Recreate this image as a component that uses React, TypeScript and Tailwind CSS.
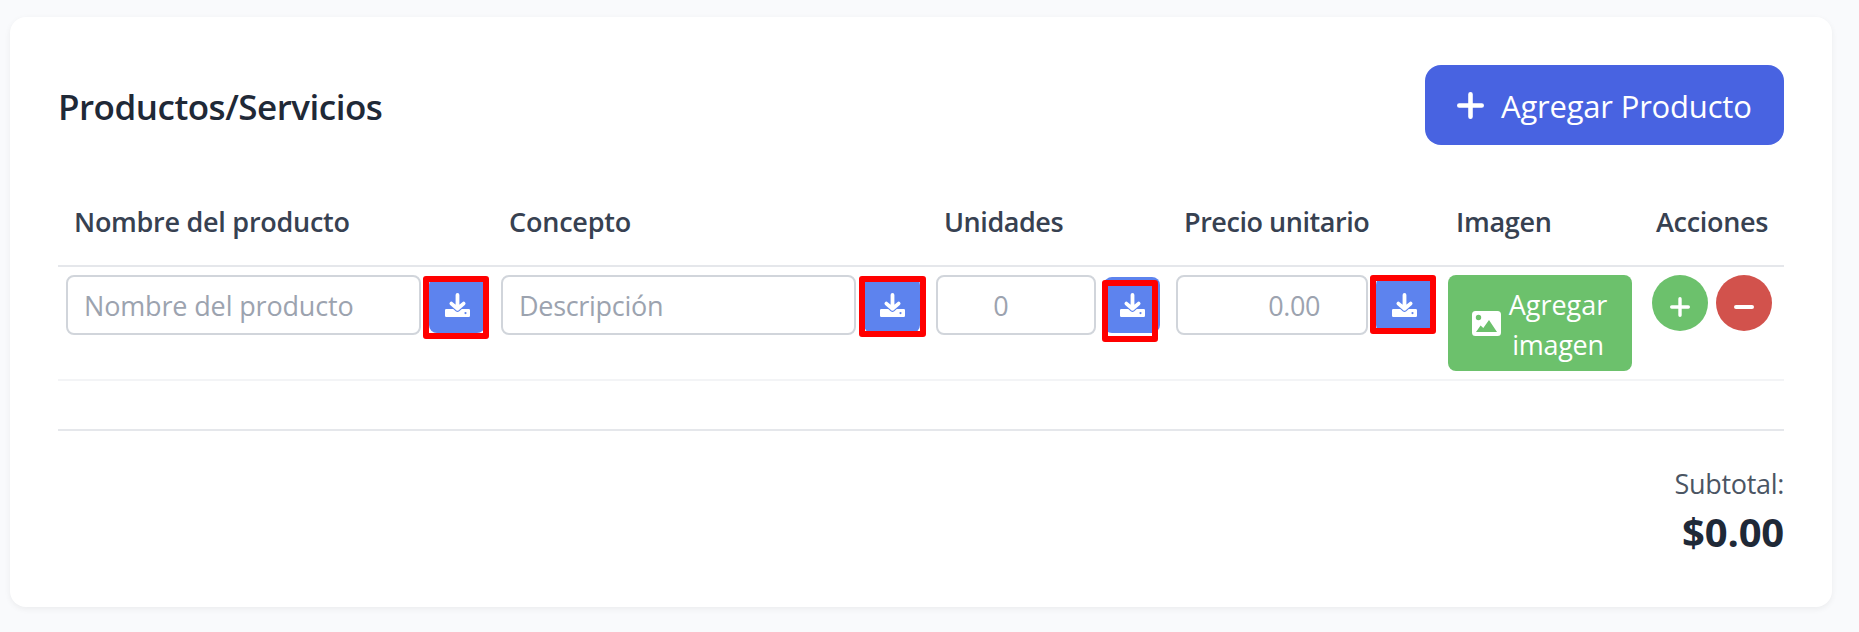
import React from "react";

function DownloadIcon() {
  return (
    <svg viewBox="0 0 25 24" className="h-6 w-[25px]" fill="none" strokeLinecap="round" strokeLinejoin="round">
      <path
        fill="#fff"
        fillRule="evenodd"
        d="M1.200 16H23.800Q25 16 25 17.200V22.800Q25 24 23.800 24H1.200Q0 24 0 22.800V17.200Q0 16 1.200 16ZM20.500 19a1.100 1.100 0 1 0 0 2.200a1.100 1.100 0 1 0 0-2.200Z"
      />
      <path d="M6.400 10.800L12.500 16.200L18.600 10.800" stroke="#5d83ee" strokeWidth="5.400" />
      <path d="M12.500 2V15M6.400 10.600L12.500 15.800L18.600 10.600" stroke="#fff" strokeWidth="3.800" />
    </svg>
  );
}

function PlusIcon({ className }: { className: string }) {
  return (
    <svg viewBox="0 0 26 26" className={className} stroke="#fff" strokeWidth="4.400" strokeLinecap="round">
      <path d="M2.200 13H23.800M13 2.200V23.800" />
    </svg>
  );
}

function ImageIcon() {
  return (
    <svg viewBox="0 0 29 25" className="h-[25px] w-[29px] shrink-0" fill="#fff" fillRule="evenodd">
      <path d="M3.500 0h22Q29 0 29 3.500v18Q29 25 25.500 25h-22Q0 25 0 21.500v-18Q0 0 3.500 0ZM6.500 3.800a2.700 2.700 0 1 0 0 5.400a2.700 2.700 0 1 0 0-5.400ZM4 21H25L17 9L11.300 17L8.600 14.500Z" />
    </svg>
  );
}

function Field({ placeholder, input, frame }: { placeholder: string; input: string; frame: string }) {
  return (
    <td className="p-2 align-top">
      <div className="flex items-center gap-2">
        <input
          placeholder={placeholder}
          className={`h-[60px] min-w-0 flex-1 rounded-lg border-2 border-[#d1d5db] bg-white pt-px text-[27px] text-gray-800 placeholder:text-[#9ca3af] ${input}`}
        />
        <div className="relative shrink-0">
          <button className="flex h-14 w-14 items-center justify-center rounded-lg bg-[#5d83ee]">
            <DownloadIcon />
          </button>
          <span className={`pointer-events-none absolute rounded-[3px] border-6 border-[#ff0000] ${frame}`} />
        </div>
      </div>
    </td>
  );
}

const columns = [
  { label: "Nombre del producto", style: "tracking-[-0.27px]" },
  { label: "Concepto", style: "tracking-[-0.2px]" },
  { label: "Unidades", style: "tracking-[-0.45px]" },
  { label: "Precio unitario", style: "tracking-[-0.45px]" },
  { label: "Imagen", style: "tracking-[-0.3px]" },
  { label: "Acciones", style: "tracking-[-0.3px]" },
];

export default function App() {
  return (
    <div className="h-[632px] w-full bg-[#f9fafc] pt-[17px] pl-[10px] font-['Open_Sans','Noto_Sans',sans-serif]">
      <section className="h-[590px] w-[1822px] rounded-2xl bg-white p-12 shadow-[0_2px_6px_rgba(0,0,0,0.06)]">
        <header className="flex h-20 items-center justify-between">
          <h2 className="pt-1 text-[35px] font-semibold tracking-[-0.5px] text-[#1f2937]">Productos/Servicios</h2>
          <button className="flex h-20 w-[359px] items-center rounded-2xl bg-[#4863e1] pl-8 text-[31px] tracking-[-0.2px] whitespace-nowrap text-white">
            <PlusIcon className="h-[27px] w-[27px]" />
            <span className="pt-[3px] pl-[17px]">Agregar Producto</span>
          </button>
        </header>

        <table className="mt-8 w-[1726px] table-fixed border-collapse">
          <colgroup>
            <col className="w-[435px]" />
            <col className="w-[435px]" />
            <col className="w-[240px]" />
            <col className="w-[272px]" />
            <col className="w-[200px]" />
            <col className="w-[144px]" />
          </colgroup>
          <thead>
            <tr className="h-[89px] border-b-2 border-[#e5e7eb]">
              {columns.map((c) => (
                <th key={c.label} className={`pt-[3px] pl-4 text-left text-[27px] font-semibold whitespace-nowrap text-[#374151] ${c.style}`}>
                  {c.label}
                </th>
              ))}
            </tr>
          </thead>
          <tbody>
            <tr className="h-[114px] border-b-2 border-[#f3f4f6]">
              <Field placeholder="Nombre del producto" input="pl-4 tracking-[-0.15px]" frame="-left-[6px] -top-px h-[63px] w-[66px]" />
              <Field placeholder="Descripción" input="pl-4 tracking-[-0.3px]" frame="-left-[5px] -top-px h-[61px] w-[67px]" />
              <Field placeholder="0" input="pr-[30px] text-center" frame="-left-[2px] top-[3px] h-[62px] w-[56px]" />
              <Field placeholder="0.00" input="pr-[46px] text-right tracking-[-0.4px]" frame="-left-[6px] -top-[2px] h-[59px] w-[66px]" />
              <td className="p-2 align-top">
                <button className="flex h-24 w-[184px] items-center gap-[7px] rounded-lg bg-[#6cc16c] pl-6 text-[27px] leading-10 text-white">
                  <ImageIcon />
                  <span className="w-[100px] pt-[3px] text-center">
                    Agregar <span className="tracking-[-0.3px]">imagen</span>
                  </span>
                </button>
              </td>
              <td className="py-2 pl-3 align-top">
                <div className="flex gap-2">
                  <button className="flex h-14 w-14 items-center justify-center rounded-full bg-[#6cc16c] pt-2">
                    <PlusIcon className="h-5 w-5" />
                  </button>
                  <button className="flex h-14 w-14 items-center justify-center rounded-full bg-[#d2524c] pt-2">
                    <span className="h-1 w-5 rounded-full bg-white" />
                  </button>
                </div>
              </td>
            </tr>
          </tbody>
        </table>

        <footer className="mt-12 border-t-2 border-[#e5e7eb] pt-[33px] text-right">
          <div className="text-[27px] leading-10 tracking-[-0.3px] text-[#4b5563]">Subtotal:</div>
          <div className="text-[40px] leading-14 font-bold tracking-[-0.2px] text-[#1f2937]">$0.00</div>
        </footer>
      </section>
    </div>
  );
}
